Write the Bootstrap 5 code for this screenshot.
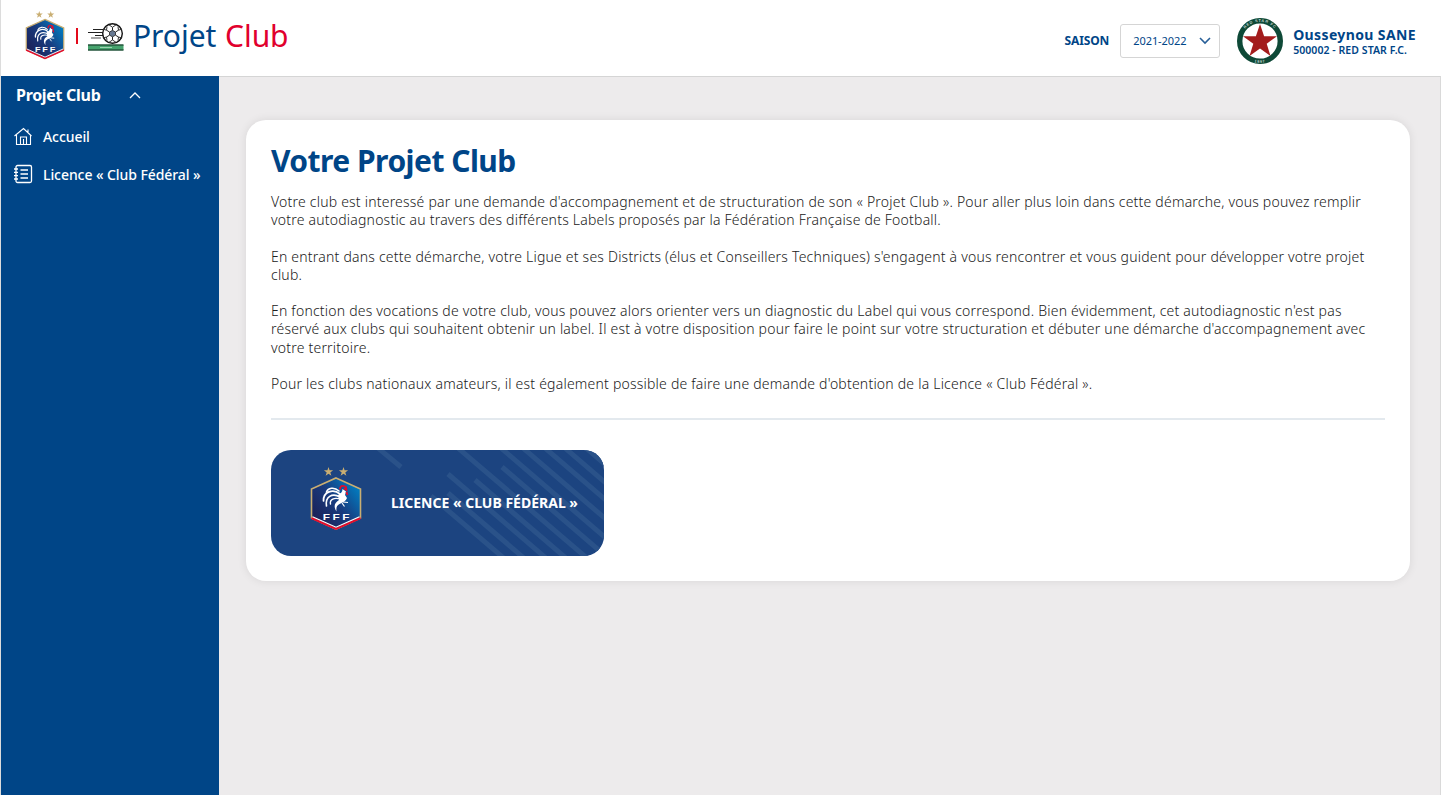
<!DOCTYPE html>
<html lang="fr">
<head>
<meta charset="utf-8">
<meta name="viewport" content="width=device-width, initial-scale=1">
<title>Projet Club</title>
<link href="https://cdn.jsdelivr.net/npm/bootstrap@5.3.0/dist/css/bootstrap.min.css" rel="stylesheet">
<style>
body{font-family:"Noto Sans","Open Sans",sans-serif;background:#fff;color:#3c3c3b;font-size:14px;overflow:hidden}
.page{height:795px;padding-left:1px;background:linear-gradient(90deg,#dcdcdc 1px,#fff 1px)}
.topbar{height:76px;padding:0 25px}
.blue{color:#004587}.red{color:#e1002d}
.brand-row{padding-bottom:4px}
.crest-sm{margin-top:-2px;margin-left:-1px}
.brand{font-size:30px;line-height:36px;white-space:nowrap;margin-left:7px;letter-spacing:-.05px}
.brand .red{margin-left:1px}
.sep{width:2px;height:16px;background:#e30a1b;margin:0 10px 0 11px}
.account{padding-top:5px}
.label-season{font-size:12px;letter-spacing:-.15px;margin-right:11px}
.season{width:100px;height:34px;border:1px solid #d5d5d5;border-radius:3px;font-size:11px;padding:0 8px 0 12px;letter-spacing:-.05px}
.season span{padding-top:1px}
.club-badge{margin:0 10px 0 17px}
.user-name{font-size:14px;line-height:17px;letter-spacing:.38px;font-weight:700}
.user-club{font-size:10.5px;line-height:14px;font-weight:600;letter-spacing:.06px}
.user-box{padding-top:1px}
.side{width:218px;background:#004587;color:#fff;white-space:nowrap}
.side-head{height:38px;padding-left:15px;font-size:16px;letter-spacing:-.3px;font-weight:700}
.side-head svg{margin-left:29px}
.side-link{height:38px;padding-left:12px;color:#fff;text-decoration:none;font-weight:500;letter-spacing:-.07px;gap:10px}
.side-links{padding-top:3px}
.content-area{background:#edebec;border-top:1px solid #d5d5d5;border-right:1px solid #d9d9d9;padding:43px 30px 0 27px}
.panel{border-radius:20px;height:461px;padding:25px;background:#fff;box-shadow:0 0 10px rgba(0,0,0,.09)}
h1{font-size:30px;line-height:32px;font-weight:700;letter-spacing:-.53px;margin:0 0 16px}
.copy{line-height:18.2px;white-space:nowrap;font-weight:300;letter-spacing:.214px;color:#202020}
.copy p{margin:0 0 18.2px}
.rule{height:2px;background:#e3e9ee;margin:25px 0 30px}
.tile{width:333px;height:106px;border-radius:20px;background:#1c4480;color:#fff;overflow:hidden}
.tile:hover{color:#fff}
.tile-art{inset:0}
.tile-crest{margin-left:39px;margin-top:-8px}
.tile-title{font-size:14px;font-weight:700;white-space:nowrap;margin:-2px 0 0 29px}
</style>
</head>
<body>
<svg width="0" height="0" class="position-absolute">
<defs>
<linearGradient id="crest" x1="0.1" y1="0.9" x2="1" y2="0.2"><stop offset="0" stop-color="#1c1f55"/><stop offset=".5" stop-color="#183b7e"/><stop offset="1" stop-color="#0080c4"/></linearGradient>
<symbol id="fff" viewBox="0 0 52 64">
<path id="st" d="M18.500 0l1.100 3.300h3.500l-2.800 2.100 1.100 3.300-2.900-2-2.900 2 1.100-3.300-2.800-2.100h3.500z" fill="#c9ae72"/>
<use href="#st" x="15"/>
<path d="M26 11L50.500 22V51L26 62 1.500 51V22z" fill="url(#crest)" stroke="#c9ae72" stroke-width="1.600"/>
<path d="M1.500 51L26 62 50.500 51" fill="none" stroke="#e30b2b" stroke-width="2"/>
<path d="M2.500 49.700L26 60.200 49.500 49.700" fill="none" stroke="#fff" stroke-width="1.200"/>
<g fill="none" stroke="#fff" stroke-linecap="round">
<path d="M29 24C24 19.500 18 21 16.500 25" stroke-width="1.600"/>
<path d="M30 27C23 21 13 25 13.500 34" stroke-width="1.700"/>
<path d="M30 30C22 25.500 15 30 16.500 39" stroke-width="1.600"/>
<path d="M31 32.500C24 29.500 19.500 33 20.500 37" stroke-width="1.400"/>
</g>
<path d="M28 28C31 26.500 32.500 25 32.500 22L36 24.500 35 28 37 31C36 34 33 35.500 29.500 37C27 38.500 26 40 26.500 44.500C23.500 40 24 36 29 33z" fill="#fff"/>
<path d="M33 35l5 .500M32 36l2.500 3.500" stroke="#fff" stroke-width="1.200"/>
<path d="M30 22.500q0-4.500 4-3.500l2 1 .500 3-2.500-1.500M36.500 25l.800 3" fill="none" stroke="#e30b2b" stroke-width="1.800"/>
<g font-family="Liberation Sans" font-weight="700" font-size="9" fill="#fff"><text x="12.800" y="53" textLength="7.200" lengthAdjust="spacingAndGlyphs">F</text><text x="22.500" y="53" textLength="7.200" lengthAdjust="spacingAndGlyphs">F</text><text x="32.200" y="53" textLength="7.200" lengthAdjust="spacingAndGlyphs">F</text></g>
</symbol>
</defs>
</svg>
<div class="page d-flex flex-column">
<header class="topbar d-flex align-items-center flex-shrink-0">
<div class="brand-row d-flex align-items-center">
<svg width="40" height="49" class="crest-sm flex-shrink-0"><use href="#fff"/></svg>
<span class="sep"></span>
<svg width="38" height="32" viewBox="0 0 38 32">
<path d="M5 9.500H15M0 12.500H15M7 15.500H15" stroke="#222" stroke-width="1"/><path d="M3 18H13" stroke="#888" stroke-width="1.500"/>
<circle cx="24.500" cy="13.500" r="9.800" fill="#fff" stroke="#111" stroke-width="1.400"/>
<path d="M24.500 10.300l3 1.800v3l-3 1.800-3-1.800v-3z" fill="#667891" stroke="#222" stroke-width=".8"/>
<path d="M24.500 10.300V7.300M27.500 12l3-1.800M27.500 15.200l3 1.800M24.500 17v3M21.500 15.200l-3 1.800M21.500 12l-3-1.800" stroke="#222" stroke-width="1"/>
<path d="M21 4.800l3.500 2.500L28 4.800M30.500 10.200l-.5-3.500M30.500 10.200l3.500-1M30.500 17l3.500 1M30.500 17l-.5 3.500M21 22.300l3.500-2.300 3.500 2.300M18.500 10.200l-3.500-1M18.500 10.200l.5-3.500M18.500 17l-3.500 1M18.500 17l.5 3.500" fill="none" stroke="#333" stroke-width="1"/>
<path d="M0 25H35.500V30H0z" fill="#46a36d"/><path d="M0 25H35.500M0 30H35.500" stroke="#24563c" stroke-width="1.400"/><path d="M12 27.500h12" stroke="#9bd3b0"/>
</svg>
<div class="brand blue">Projet <span class="red">Club</span></div>
</div>
<div class="account ms-auto d-flex align-items-center">
<b class="blue label-season">SAISON</b>
<div class="season d-flex align-items-center justify-content-between blue"><span>2021-2022</span><svg width="12" height="8" fill="none" stroke="#285f98" stroke-width="1.600"><path d="M1 1l5 5 5-5"/></svg></div>
<svg class="club-badge" width="46" height="46" viewBox="0 0 46 46">
<defs><path id="ringTop" d="M3.700 23a19.300 19.300 0 0 1 38.600 0"/><path id="ringBottom" d="M1 23a22 22 0 0 0 44 0"/></defs>
<circle cx="23" cy="23" r="20.300" fill="#fff" stroke="#0e4937" stroke-width="5.400"/><path d="M23 6l4.100 12.200H40L29.700 25.700 33.500 38 23 30.600 12.500 38l3.800-12.300L6 18.200H18.900z" fill="#a31c1c"/>
<g font-family="Liberation Sans" font-weight="700" font-size="3.800" fill="#c5d5ce" text-anchor="middle" letter-spacing=".8"><text><textPath href="#ringTop" startOffset="50%">RED STAR FC</textPath></text><text><textPath href="#ringBottom" startOffset="50%">1897</textPath></text></g>
</svg>
<div class="user-box blue"><div class="user-name">Ousseynou SANE</div><div class="user-club">500002 - RED STAR F.C.</div></div>
</div>
</header>
<div class="d-flex flex-grow-1">
<nav class="side flex-shrink-0">
<div class="side-head d-flex align-items-center">Projet Club<svg width="12" height="8" fill="none" stroke="#fff" stroke-width="1.300"><path d="M1 7l5-5 5 5"/></svg></div>
<div class="side-links">
<a href="#" class="side-link d-flex align-items-center"><svg width="20" height="20" fill="none" stroke="#fff" stroke-width="1.100"><path d="M1.500 10L10.500 2.500l8 7.500M3.500 9V18.500h14V9M15 6V3.500M7.500 18v-7h6V18M10.500 13v5M7.500 18.500V11"/></svg>Accueil</a>
<a href="#" class="side-link d-flex align-items-center"><svg width="20" height="20" fill="none" stroke="#fff" stroke-width="1.300"><rect x="3" y="1.500" width="15.500" height="17" rx="1.500"/><path d="M1 5h4M1 8.300h4M1 11.700h4M1 15h4M7.500 6H15M7.500 10H15M7.500 14H15"/></svg>Licence « Club Fédéral »</a>
</div>
</nav>
<main class="content-area flex-grow-1"><section class="panel">
<h1 class="blue">Votre Projet Club</h1>
<div class="copy">
<p>Votre club est interessé par une demande d'accompagnement et de structuration de son « Projet Club ». Pour aller plus loin dans cette démarche, vous pouvez remplir<br>votre autodiagnostic au travers des différents Labels proposés par la Fédération Française de Football.</p>
<p>En entrant dans cette démarche, votre Ligue et ses Districts (élus et Conseillers Techniques) s'engagent à vous rencontrer et vous guident pour développer votre projet<br>club.</p>
<p>En fonction des vocations de votre club, vous pouvez alors orienter vers un diagnostic du Label qui vous correspond. Bien évidemment, cet autodiagnostic n'est pas<br>réservé aux clubs qui souhaitent obtenir un label. Il est à votre disposition pour faire le point sur votre structuration et débuter une démarche d'accompagnement avec<br>votre territoire.</p>
<p>Pour les clubs nationaux amateurs, il est également possible de faire une demande d'obtention de la Licence « Club Fédéral ».</p>
</div>
<div class="rule"></div>
<a href="#" class="tile position-relative d-flex align-items-center text-decoration-none">
<svg class="tile-art position-absolute" width="333" height="106" fill="none" stroke="#2a5289" stroke-width="5"><path d="M107-2L130 17M160 46L235 110M177 43L254 109M177 24L276 109M204 30L296 109M187-2L317 109M231 17L337 108M230-2L337 90M252-2L337 71M274-2L337 52M294-2L337 35M315-2L337 17"/></svg>
<svg class="tile-crest position-relative flex-shrink-0" width="52" height="64"><use href="#fff"/></svg>
<span class="tile-title position-relative">LICENCE « CLUB FÉDÉRAL »</span>
</a>
</section></main>
</div>
</div>
<script src="https://cdn.jsdelivr.net/npm/bootstrap@5.3.0/dist/js/bootstrap.bundle.min.js"></script>
</body>
</html>
